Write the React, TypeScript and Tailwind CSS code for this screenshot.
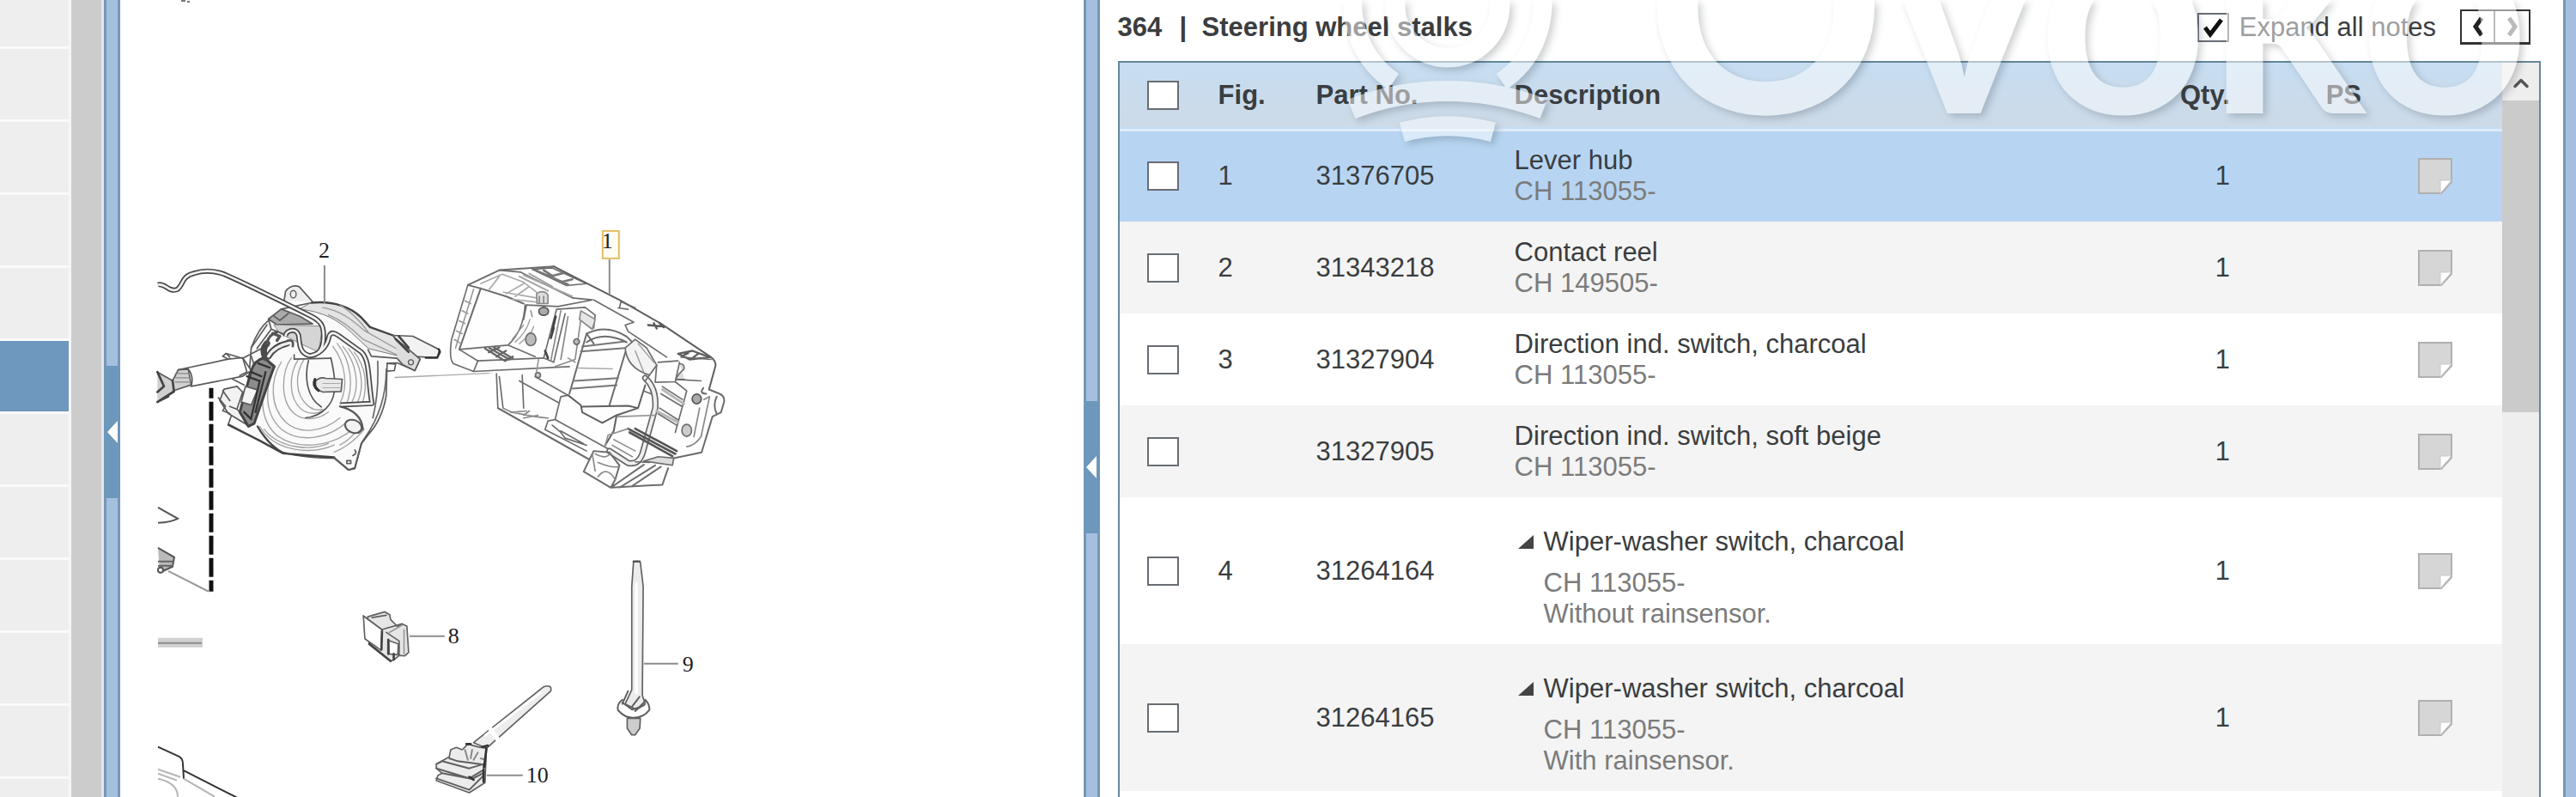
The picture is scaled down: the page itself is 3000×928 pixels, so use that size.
import React from 'react';
import { ChevronUp } from 'lucide-react';

type Part = {
  fig: string;
  partNo: string;
  name: string;
  notes: string[];
  nested?: boolean;
};

const parts: Part[] = [
  { fig: '1', partNo: '31376705', name: 'Lever hub', notes: ['CH 113055-'] },
  { fig: '2', partNo: '31343218', name: 'Contact reel', notes: ['CH 149505-'] },
  { fig: '3', partNo: '31327904', name: 'Direction ind. switch, charcoal', notes: ['CH 113055-'] },
  { fig: '', partNo: '31327905', name: 'Direction ind. switch, soft beige', notes: ['CH 113055-'] },
  { fig: '4', partNo: '31264164', name: 'Wiper-washer switch, charcoal', notes: ['CH 113055-', 'Without rainsensor.'], nested: true },
  { fig: '', partNo: '31264165', name: 'Wiper-washer switch, charcoal', notes: ['CH 113055-', 'With rainsensor.'], nested: true }
];

const sidebarRows = Array.from({ length: 12 }, (_, index) => index);

const checkboxClass =
  'block w-[37px] h-[34px] appearance-none bg-white border-2 border-[#686d73] shrink-0';

const Sidebar = () => (
  <aside className="flex shrink-0">
    <ul className="w-20 -mt-7">
      {sidebarRows.map((row) => (
        <li
          key={row}
          className={row === 5 ? 'h-[85px] border-b-3 border-[#fafafa] bg-[#6f98be]' : 'h-[85px] border-b-3 border-[#fafafa] bg-[#eeeeee]'}
        />
      ))}
    </ul>
    <div className="w-[3px] bg-[#f6f6f6]" />
    <div className="w-[35px] bg-[#cbcccb]" />
    <div className="w-[3px] bg-[#e3e6ea]" />
  </aside>
);

const Splitter = ({ handle }: { handle: string }) => (
  <div className="flex flex-col w-[19px] shrink-0 bg-[#a5c0df] border-x-3 border-[#7996b8]">
    <button
      aria-label="Collapse panel"
      className={`${handle} h-[154px] -mx-[3px] shrink-0 bg-[#6d97bb] flex items-center justify-center`}
    >
      <svg viewBox="0 0 12 26" className="w-3 h-[26px]">
        <path d="M12 0 V26 L0 13 Z" fill="#fff" />
      </svg>
    </button>
  </div>
);

// Contact reel with its cable and connector
const ContactReel = () => (
  <g transform="translate(176 300) scale(0.3333)" fill="none" stroke="#5a5a5a" strokeWidth="5" strokeLinejoin="round" strokeLinecap="round">
    <path d="M465 150 L470 118 Q490 92 518 102 L565 155" fill="#eee" />
    <ellipse cx="497" cy="128" rx="10" ry="13" strokeWidth="4" />
    <path
      d="M350 315 C365 275 385 240 410 220 L455 180 L560 158 C640 150 700 175 735 210 L765 243 L845 272 L900 330 L940 355 L922 395 L860 368 L825 370 L822 480 C815 530 790 590 758 618 L735 650 L712 738 L690 742 L640 700 C560 705 500 690 460 682 L380 640 L270 582 L285 540 L340 440 Z"
      fill="#fafafa"
    />
    <path d="M560 158 C640 150 700 175 735 210 L765 243 L845 272 L890 350 L760 318 L700 262 C650 215 600 190 520 180 Z" fill="#e4e4e4" stroke="#777" strokeWidth="3" />
    <path d="M560 158 C640 150 700 175 735 210 L765 243 L845 272" strokeWidth="7" stroke="#444" />
    <path d="M600 175 C660 185 700 215 745 255 L860 320 M620 200 C670 220 705 250 740 285 L870 345 M660 165 C700 190 730 220 760 262" stroke="#999" strokeWidth="4" />
    <path d="M845 272 L915 275 L1008 322 L1000 350 L905 345 Z" fill="#f2f2f2" />
    <path d="M1005 320 L1010 330 L1000 350 L960 350" stroke="#333" strokeWidth="7" />
    <path d="M850 280 L905 325 L940 355 L922 395 L880 375 L862 355" fill="#ddd" />
    <path d="M855 285 L900 330 M866 275 L900 315" stroke="#444" strokeWidth="8" />
    <circle cx="908" cy="366" r="9" strokeWidth="4" />
    <path d="M758 322 L770 345 L860 352 M825 370 L855 372 L850 395 L825 397" />
    <path d="M792 362 C795 440 790 500 775 560 M822 390 C822 480 800 560 740 640" stroke="#666" />
    {/* concentric rings of the reel */}
    <g stroke="#a2a2a2" strokeWidth="4">
      <path d="M455 365 C415 430 415 520 470 575 C520 620 600 610 660 560" />
      <path d="M435 380 C395 450 395 545 455 600 C520 650 620 635 690 570" />
      <path d="M418 400 C375 470 380 570 440 622 C520 680 640 655 705 600" />
      <path d="M490 350 C455 400 450 500 500 545 C530 570 580 570 620 540" />
      <path d="M515 355 C480 410 480 490 525 530 C550 548 580 548 600 535" />
      <path d="M535 355 C500 410 505 480 545 515 C560 530 580 535 600 530" />
      <path d="M380 590 C430 680 560 690 640 655 M395 600 C450 670 560 675 620 650" />
      <path d="M650 300 C700 360 710 450 680 520 M670 310 C720 370 730 450 702 505 M690 318 C735 370 748 450 722 505 M710 330 C748 380 758 440 740 505 M635 310 C680 370 690 450 660 510" />
      <path d="M660 655 C690 640 710 620 730 590 M640 680 C690 660 720 630 745 600" />
    </g>
    <path d="M550 360 C535 420 545 490 595 522 M628 350 C640 400 645 440 640 470 C635 510 600 555 540 560" stroke="#555" />
    <path d="M372 590 C395 630 420 660 460 682 C520 695 590 692 640 700 M270 585 L380 640 L460 684 L640 698" stroke="#444" strokeWidth="7" />
    <path d="M575 432 Q590 416 610 422 L668 425 L664 468 L600 470 Q570 460 575 432 Z" fill="#e8e8e8" />
    <path d="M573 425 Q562 448 585 465" stroke="#333" strokeWidth="9" />
    <path d="M600 440 H660 M600 455 H660" stroke="#aaa" strokeWidth="3" />
    <ellipse cx="707" cy="590" rx="30" ry="22" transform="rotate(22 707 590)" fill="#f2f2f2" strokeWidth="6" />
    <path d="M660 520 C700 530 735 550 740 598 L725 612" strokeWidth="7" />
    <path d="M712 672 Q722 685 705 692 M684 710 h14 v10 h-14 z" strokeWidth="5" />
    <path d="M640 700 L690 742 L712 735 L735 650 L765 610" strokeWidth="6" />
    {/* bracket behind the cable */}
    <path d="M410 215 L455 180 L520 205 L565 232 L440 235 Z" fill="#aaa" />
    <path d="M430 235 L600 240 L585 330 L520 300 L450 265 Z" fill="#d5d5d5" stroke="#888" strokeWidth="3" />
    <path d="M410 215 L420 250 L470 270 M430 205 L450 220 L480 195 M350 315 L405 235 M370 318 L420 250 M500 340 L500 355 L625 352" />
    {/* sleeve */}
    <path d="M22 400 L75 430 L95 392 L130 390 L140 445 L80 465 L22 505" fill="#d0d0d0" />
    <path d="M22 400 L45 450 L22 470 M75 430 L80 468 L22 505 M30 500 L60 485" strokeWidth="8" stroke="#444" />
    <path d="M85 405 H135 M85 420 H138 M85 435 H138" stroke="#888" strokeWidth="4" />
    <path d="M95 392 L270 355 L320 350 L350 395 L320 415 L140 450 Q150 415 130 390 Z" fill="#fff" />
    <path d="M270 355 L250 345 L262 335 L320 352 L410 305 M262 335 L275 348 M320 350 L335 400 L310 412 M350 345 L365 390" />
    {/* connector */}
    <path d="M240 500 L255 460 L300 450 L320 470 L300 530 L330 560 L345 590 L270 545 Z" fill="#f2f2f2" />
    <path d="M235 490 L260 520 L250 535 L275 545 M250 465 L275 500 M300 530 L275 520 M285 425 L325 445" />
    <path d="M395 350 Q360 360 350 395 L310 540 L340 590 L360 580 L430 380 Z" fill="#8c8c8c" stroke="#444" strokeWidth="9" />
    <path d="M330 450 L372 462 L350 515 L315 505 Z" fill="#f4f4f4" />
    <path d="M335 415 L375 430 M350 400 L385 415 M380 430 L350 560 M400 400 L365 540 M325 540 L350 565 M375 370 L415 385" stroke="#333" strokeWidth="7" />
    <path d="M400 350 Q385 320 405 300 M410 345 Q430 310 475 300" stroke="#4a4a4a" strokeWidth="22" />
    <path d="M410 345 Q430 310 485 298" stroke="#eee" strokeWidth="10" />
    <path d="M405 300 Q410 270 440 260 M425 265 L450 275 L440 290" stroke="#555" strokeWidth="10" />
    {/* cable, drawn as an outline with a light core */}
    <g>
      <path d="M24 95 C50 88 60 122 90 112 C112 100 105 65 150 55 C190 42 230 48 260 60 C340 95 470 160 560 205 C600 225 605 245 602 290 C598 330 575 345 550 342 C515 330 520 295 515 270 C505 244 470 255 470 275 M560 342 C600 335 618 300 622 275 C630 255 645 266 660 276 L735 330 C765 360 757 420 772 510 L662 515" stroke="#474747" strokeWidth="18" strokeLinecap="butt" />
      <path d="M24 95 C50 88 60 122 90 112 C112 100 105 65 150 55 C190 42 230 48 260 60 C340 95 470 160 560 205 C600 225 605 245 602 290 C598 330 575 345 550 342 C515 330 520 295 515 270 C505 244 470 255 470 275 M560 342 C600 335 618 300 622 275 C630 255 645 266 660 276 L735 330 C765 360 757 420 772 510 L662 515" stroke="#f2f2f2" strokeWidth="8" strokeLinecap="butt" />
    </g>
    <path d="M478 290 Q500 285 495 310" stroke="#555" strokeWidth="8" />
  </g>
);

// Lever hub housing
const LeverHub = () => (
  <g transform="translate(510 262) scale(0.3333)" fill="none" stroke="#6c6c6c" strokeWidth="5" strokeLinejoin="round" strokeLinecap="round">
    <path d="M-150 533 L400 508" stroke="#aaa" strokeWidth="4" />
    <path d="M105 210 L215 158 L405 145 L640 265 L780 345 L955 462 L970 495 L948 575 L1000 600 L990 655 L960 670 L922 795 L825 815 L820 840 L800 850 L785 908 L605 918 L510 862 L530 820 L210 640 L205 520 L125 512 L48 482 L42 430 Z" fill="#fefefe" stroke="none" />
    {/* left window */}
    <path d="M105 210 L48 400 Q38 470 55 485 L125 512 L140 475 L75 435" />
    <path d="M105 210 L150 222 L75 435 M105 210 L215 158 L405 145 M150 222 L240 250 L300 275" strokeWidth="6" />
    <path d="M125 225 L62 430 M95 265 L115 275 M85 300 L105 310 M75 335 L95 345 M65 370 L85 380 M58 400 L76 412" stroke="#999" strokeWidth="5" />
    <path d="M75 435 L245 420 L340 460 M245 420 Q300 370 305 280 M125 512 L460 495 M140 475 L370 465" />
    <path d="M165 432 L235 475 M180 430 L250 470 M195 427 L262 466 M178 445 L215 428 M205 460 L238 440 M235 475 L262 460" stroke="#666" strokeWidth="7" />
    <path d="M270 410 Q310 375 322 330 M285 415 Q330 380 335 355 M260 400 L300 350" stroke="#999" strokeWidth="4" />
    <path d="M150 205 L225 172 L300 200 L345 235 M180 225 L215 180 M240 240 L300 205 M270 250 L320 215 M230 235 L345 255 M260 260 L350 270" stroke="#aaa" />
    <path d="M345 240 q25 -15 40 5 v30 h-38 z M355 250 v25 M370 250 v25" fill="#ddd" stroke="#888" />
    {/* top plate */}
    <path d="M215 158 L290 165 L470 255 L540 262 L420 285 L310 280" />
    <path d="M300 175 L470 250 M320 170 L400 215 M285 180 L385 230" stroke="#a5a5a5" strokeWidth="6" />
    <path d="M330 155 L400 150 L520 205 L450 212 Z" />
    <path d="M345 160 L455 208 M370 158 L400 178 L440 168 M405 185 L430 200 L470 190" stroke="#777" strokeWidth="8" />
    <path d="M405 145 L640 265 L780 345 L955 462 Q975 480 970 495 L948 575" strokeWidth="6" stroke="#5e5e5e" />
    <path d="M545 262 L685 340 L655 350 L665 372 L800 462 M635 290 L640 268 L690 290 M630 290 L665 295" />
    <path d="M735 350 L785 355 M755 343 L765 362 M775 343 L790 358" stroke="#555" strokeWidth="7" />
    <path d="M840 450 L890 440 L950 462 L880 470 Z M860 455 L875 448 M890 465 L910 450" stroke="#5e5e5e" strokeWidth="7" />
    <path d="M770 480 L840 475 M955 470 L850 462" />
    {/* inner left wall */}
    <path d="M310 280 L300 330 M415 295 L370 465 L405 480 L445 310 M415 295 L515 288 L550 315 L545 360" />
    <path d="M430 300 L395 475 M500 330 L480 470 L410 495 M455 320 L430 470" stroke="#8a8a8a" />
    <path d="M412 320 L400 370 M405 360 L395 395 M375 440 L385 465" stroke="#444" strokeWidth="8" />
    <path d="M500 300 L550 330 L540 365 L495 330 Z" fill="#e6e6e6" stroke="#888" />
    <ellipse cx="325" cy="400" rx="18" ry="22" fill="#bbb" />
    <ellipse cx="370" cy="302" rx="17" ry="14" fill="#aaa" stroke="#555" />
    <circle cx="485" cy="408" r="10" fill="#bbb" />
    <circle cx="350" cy="525" r="9" fill="#ccc" />
    <path d="M352 470 L345 515 M325 300 L330 320 M455 465 L480 480" stroke="#999" />
    {/* centre compartment */}
    <path d="M520 380 L460 590 M520 380 Q590 345 660 390 L680 410 M520 410 Q580 370 660 410 M520 380 L545 415 M660 430 L600 630" strokeWidth="6" />
    <path d="M505 425 L650 408 M500 442 L655 430 M478 545 L630 535 M470 572 L625 560" stroke="#777" strokeWidth="6" />
    <path d="M490 500 L610 503" stroke="#aaa" strokeWidth="4" />
    <path d="M655 430 Q660 500 740 525 L765 490 L730 430 L690 400 Z" fill="#f3f3f3" />
    <path d="M700 415 L755 480 M690 440 L720 515" stroke="#999" strokeWidth="4" />
    {/* lower body */}
    <path d="M205 520 L210 640 L530 820 M215 530 L228 640 M285 545 L420 620 M340 530 L455 595 L430 600 L410 680 M295 525 L300 640" />
    <path d="M455 595 L500 630 L505 655 L575 692 L625 665 L700 640 L725 560 M505 635 L665 632 L700 640 M625 665 L615 720 L585 770" stroke="#606060" strokeWidth="6" />
    <path d="M410 680 L600 785 M375 715 L385 685 L410 680 M375 715 L520 790 M400 700 L430 725 L445 745 L520 770 M430 720 L510 765" />
    <path d="M228 640 L260 655 L340 670 L385 675 M300 665 L320 650 M300 675 L350 665 M255 655 L310 650" stroke="#888" />
    <path d="M210 640 L530 820" strokeWidth="6" />
    {/* right hoop */}
    <path d="M725 535 Q765 570 760 640 L715 800 Q700 840 665 832 L600 790" stroke="#666" strokeWidth="22" />
    <path d="M725 535 Q765 570 760 640 L715 800 Q700 840 665 832 L600 790" stroke="#f0f0f0" strokeWidth="12" />
    <path d="M765 490 L760 550 L830 548 L845 480 M740 525 L725 545 M720 580 L745 590" />
    <path d="M845 485 q20 0 15 20 q-20 15 -28 35 h30" fill="#ddd" />
    <path d="M830 548 L870 580 L830 725 M785 565 L855 610 M780 590 L855 635 M775 640 L838 680 M770 660 L835 700 M840 540 L920 545" />
    <path d="M765 650 L840 690 M785 575 L860 625" stroke="#b8b8b8" strokeWidth="9" />
    <ellipse cx="870" cy="718" rx="17" ry="21" fill="#ccc" />
    <ellipse cx="905" cy="608" rx="16" ry="17" fill="#aaa" stroke="#555" />
    <path d="M928 570 q-15 20 10 20 M948 575 L985 590 Q1005 600 1000 620 L990 655 L960 670 M975 600 Q960 630 975 660 M960 670 L922 795 L825 815" strokeWidth="6" />
    <path d="M930 610 L950 600 L920 740 Q900 770 870 775 M915 640 L895 740" stroke="#888" />
    <path d="M665 712 L830 800 M670 725 L820 808 M690 712 L835 790" stroke="#555" strokeWidth="8" />
    <path d="M630 670 L760 665 M585 770 L595 735 L665 712 M615 750 L690 790 M610 770 L680 810" stroke="#909090" />
    {/* foot */}
    <path d="M530 820 L510 862 L605 918 L785 908 L805 850 M530 820 L545 790 L600 795 L635 840 L620 890 L605 918 M605 918 L720 838 M635 918 L760 840 M680 912 L780 845" strokeWidth="6" />
    <path d="M550 800 Q590 820 600 800 M560 830 Q610 850 630 845 M560 880 Q590 840 620 890 M540 800 L550 860" stroke="#888" />
    <path d="M720 825 L820 840 L825 815 L770 810 Z M690 828 L740 830" fill="#ddd" />
  </g>
);

// Clip, cable tie and fir-tree tie
const Fasteners = () => (
  <g transform="translate(400 640) scale(0.3333)" fill="none" stroke="#606060" strokeWidth="5" strokeLinejoin="round" strokeLinecap="round">
    <path d="M85 235 L145 218 L162 228 L165 245 L190 270 L205 260 L222 268 L228 360 L215 372 L195 370 L178 385 L165 390 L90 330 Z" fill="#e6e6e6" />
    <path d="M70 232 L135 280 L132 352 L75 312 Z" fill="#fff" />
    <path d="M70 232 L135 280 L205 260 M100 238 L150 230 M150 290 L195 320 L195 370" />
    <path d="M158 318 L192 330 L190 368 L160 365 Z" fill="#fff" />
    <path d="M135 285 L133 350 M157 315 L157 365 M90 330 L165 390 M176 365 V385" stroke="#444" strokeWidth="8" />
    <path d="M205 265 L160 290 M212 280 V365" stroke="#999" />

    <path d="M1014 45 Q1025 38 1038 45 L1048 130 L1045 510 L1055 540 L1025 560 L985 540 L1008 490 L1008 130 Z" fill="#ececec" />
    <path d="M1024 120 V500" stroke="#fff" strokeWidth="10" />
    <path d="M1014 42 H1036" stroke="#555" strokeWidth="7" />
    <path d="M975 525 Q955 540 960 562 Q985 590 1015 588 Q1050 588 1070 560 Q1070 540 1055 525 M975 535 L1010 560 L1050 545 M995 495 L975 540 M1008 550 L1035 515 M1020 565 L1055 530" strokeWidth="6" />
    <path d="M992 590 L1038 590 L1036 625 L1020 648 L1008 648 L992 625 Z" fill="#ccc" />

    <path d="M455 675 L700 480 Q730 470 725 495 L500 695 Z" fill="#ededed" />
    <path d="M495 650 L690 500" stroke="#fff" strokeWidth="8" />
    <path d="M510 622 L540 665" stroke="#fff" strokeWidth="16" />
    <path d="M375 700 L395 692 L415 700 L435 680 L470 690 L500 695 L495 815 L440 850 L325 808 L330 790 L345 782 L325 765 L325 750 L370 725 Z" fill="#ececec" />
    <path d="M325 750 L345 740 L440 765 L490 750 L490 770 L440 800 L325 765 M345 782 L450 802 L492 780 M325 800 L440 840 L490 790 M370 730 L400 740 L480 750" strokeWidth="6" />
    <path d="M425 700 L435 735 M450 700 L445 730 M470 710 L455 735 M480 730 L495 735" stroke="#888" strokeWidth="6" />
    <path d="M430 680 H445 M485 690 L505 685 M500 695 L492 760 M440 795 L455 805 M490 770 L490 812" stroke="#333" strokeWidth="8" />
  </g>
);

const Drawing = () => (
  <svg viewBox="140 0 1122 928" preserveAspectRatio="xMinYMin meet" className="w-full h-full">
    <path d="M211 1 H216 M218 2 H221" stroke="#777" strokeWidth="2" />
    <ContactReel />
    <LeverHub />
    <Fasteners />

    <path d="M246 452 V689" stroke="#111" strokeWidth="5" strokeDasharray="22 4" strokeDashoffset="10" />
    <g fill="none" stroke="#555" strokeWidth="2">
      <path d="M184 591 L207 604 Q200 608 184 609" />
      <path d="M184 638 L203 649 L201 660 L186 667" fill="#bbb" />
      <path d="M184 654 H202 M184 659 H200" stroke="#666" />
      <circle cx="187" cy="664" r="3" fill="#fff" />
      <path d="M196 665 L243 689" stroke="#999" />
      <path d="M184 870 L208 881 Q213 883 213 890 L214 907 M213 897 L276 929" stroke="#333" />
      <path d="M184 896 L210 905 M184 901 L206 909 M214 907 L250 928 M184 907 Q207 912 207 928" stroke="#b5b5b5" />
    </g>
    <rect x="184" y="743" width="52" height="11" fill="#d0d0d0" />
    <path d="M184 749 H235" stroke="#8a8a8a" strokeWidth="2" />

    <g stroke="#8c8c8c" strokeWidth="2">
      <path d="M378 309 V353" />
      <path d="M710 302 V343" />
      <path d="M477 741 H518" />
      <path d="M750 773 H790" />
      <path d="M567 903 H609" />
    </g>
    <rect x="702" y="269" width="19" height="32" fill="#fffdf2" stroke="#e2bf62" strokeWidth="2" />
    <g className="font-['Liberation_Serif',serif] text-[26px]" fill="#222">
      <text x="371" y="300">2</text>
      <text x="701" y="289">1</text>
      <text x="522" y="749">8</text>
      <text x="795" y="782">9</text>
      <text x="613" y="911">10</text>
    </g>
  </svg>
);

const Watermark = () => (
  <svg
    viewBox="1280 0 1705 180"
    className="absolute top-0 left-0 w-full pointer-events-none opacity-50 drop-shadow-[4px_4px_4px_rgba(40,50,60,0.45)]"
  >
    <g fill="none" stroke="#fff">
      <circle cx="1685" cy="6" r="61" strokeWidth="23" />
      <path d="M1622 95 A109 109 0 0 1 1685 -104 A109 109 0 0 1 1748 95" strokeWidth="22" />
      <path d="M1573 127 A309 309 0 0 1 1797 127" strokeWidth="24" />
      <path d="M1632 154 A204 204 0 0 1 1738 154" strokeWidth="23" />
    </g>
    <text x="1916" y="132" fill="#fff" className="font-['Lato',sans-serif] text-[346px] font-bold">
      Ovoko
    </text>
  </svg>
);

const NoteIcon = () => (
  <svg viewBox="0 0 40 42" className="w-10 h-[42px] mx-auto">
    <path d="M1 1 H39 V28 L27 41 H1 Z" fill="#d6d6d6" stroke="#b0b0b0" strokeWidth="2" />
    <path d="M39 26 L26 41 V26 Z" fill="#fff" stroke="#c8c8c8" />
  </svg>
);

const PartRow = ({ part, index }: { part: Part; index: number }) => {
  const background = index === 0 ? 'bg-[#b7d5f2]' : index % 2 ? 'bg-[#f4f4f4]' : 'bg-white';

  return (
    <tr className={`${background} ${part.nested ? 'h-[171px]' : 'h-[107px]'}`}>
      <td className="pl-8">
        <input type="checkbox" aria-label={`Select ${part.partNo}`} className={checkboxClass} />
      </td>
      <td>{part.fig}</td>
      <td>{part.partNo}</td>
      <td className={part.nested ? 'pt-4' : ''}>
        <div className="flex items-center">
          {part.nested && (
            <svg viewBox="0 0 18 16" className="w-[18px] h-4 ml-1 mr-3">
              <path d="M18 0 V16 H0 Z" fill="#444" />
            </svg>
          )}
          {part.name}
        </div>
        <div className={part.nested ? 'pl-[34px] pt-3 text-[#7b7b7b]' : 'text-[#7b7b7b]'}>
          {part.notes.map((note) => (
            <p key={note}>{note}</p>
          ))}
        </div>
      </td>
      <td className="text-right">1</td>
      <td />
      <td>
        <NoteIcon />
      </td>
    </tr>
  );
};

const PartsPanel = () => (
  <main className="relative flex flex-[1705] min-w-0">
    <div className="flex flex-col flex-1 min-w-0 ml-[21px] mr-[26px]">
      <div className="flex items-center justify-between h-[71px] pb-2 pr-3 shrink-0">
        <h1 className="flex font-bold">
          <span className="w-[72px]">364</span>
          <span className="w-[26px]">|</span>
          Steering wheel stalks
        </h1>
        <div className="flex items-center">
          <label className="flex items-center gap-3">
            <span className="relative">
              <input type="checkbox" defaultChecked className={checkboxClass} />
              <svg viewBox="0 0 37 34" className="absolute inset-0 w-[37px] h-[34px] pointer-events-none">
                <path d="M9 17 L15 25 L28 8" fill="none" stroke="#111" strokeWidth="5" />
              </svg>
            </span>
            Expand all notes
          </label>
          <div className="flex ml-7 h-[41px] border-2 border-b-3 border-[#333]">
            <button aria-label="Previous" className="w-[39px] flex items-center justify-center border-r-2 border-[#777]">
              <svg viewBox="0 0 14 24" className="w-3.5 h-6">
                <path d="M11 2 L4 12 L11 22" fill="none" stroke="#222" strokeWidth="5" />
              </svg>
            </button>
            <button aria-label="Next" className="w-[39px] flex items-center justify-center">
              <svg viewBox="0 0 14 24" className="w-3.5 h-6">
                <path d="M3 2 L10 12 L3 22" fill="none" stroke="#777" strokeWidth="5" />
              </svg>
            </button>
          </div>
        </div>
      </div>

      <div className="flex flex-1 min-h-0 overflow-hidden border-2 border-b-0 border-[#66879a]">
        <div className="flex-1 min-w-0">
          <table className="w-full table-fixed text-left">
            <thead>
              <tr className="h-[78px] border-b-3 border-[#deebf8] bg-linear-to-b from-[#c6ddf2] to-[#cddae7]">
                <th className="w-[115px] pl-8">
                  <input type="checkbox" aria-label="Select all" className={checkboxClass} />
                </th>
                <th className="w-[114px]">Fig.</th>
                <th className="w-[231px]">Part No.</th>
                <th>Description</th>
                <th className="w-[100px] text-right">Qty.</th>
                <th className="w-[161px] pr-2 text-right">PS</th>
                <th className="w-[156px]" />
              </tr>
            </thead>
            <tbody>
              {parts.map((part, index) => (
                <PartRow key={part.partNo} part={part} index={index} />
              ))}
            </tbody>
          </table>
        </div>
        {/* scrollbar */}
        <div className="w-[43px] shrink-0 bg-[#eeeeee]">
          <button aria-label="Scroll up" className="flex items-center justify-center w-full h-11 pt-1">
            <ChevronUp className="w-7 h-7 text-[#555]" strokeWidth={3} />
          </button>
          <div className="h-[363px] bg-[#cbcbcb]" />
        </div>
      </div>
    </div>

    <Watermark />
  </main>
);

const App = () => {
  return (
    <div className="flex h-screen overflow-hidden bg-white font-['Liberation_Sans',Arial,sans-serif] text-[31px] leading-9 text-[#3a3d40]">
      <Sidebar />
      <Splitter handle="mt-[426px]" />
      <section className="flex-[1122] min-w-0">
        <Drawing />
      </section>
      <Splitter handle="mt-[467px]" />
      <PartsPanel />
      <div className="w-[15px] shrink-0 bg-[#a5c0df] border-l-3 border-[#7996b8]" />
    </div>
  );
};

export default App;
